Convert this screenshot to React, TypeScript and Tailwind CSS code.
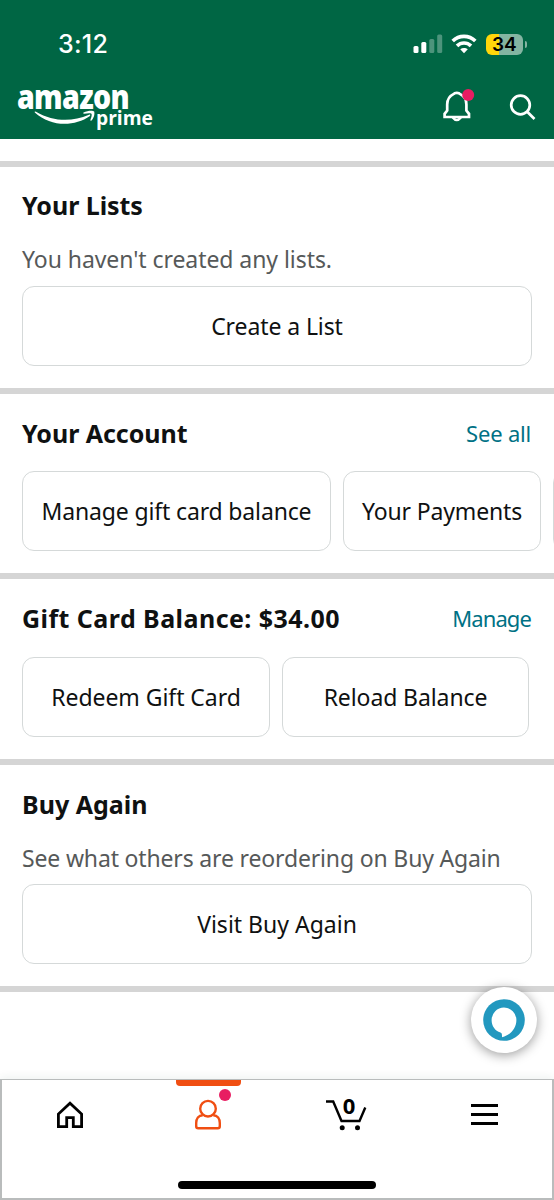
import React from 'react';

const OutlineButton = ({ label, className }: { label?: string, className: string }) => (
  <button className={`h-20 shrink-0 whitespace-nowrap rounded-xl border-[1.5px] border-[#d5d9d9] bg-white text-[23px] text-[#0f1111] ${className}`}>
    {label}
  </button>
);

const SectionTitle = ({ title, link, className, linkClass }: { title: string, link?: string, className: string, linkClass?: string }) => (
  <div className="flex h-10 items-center justify-between pr-[23px]">
    <h2 className={`whitespace-nowrap text-[25px] font-bold text-[#0f1111] ${className}`}>{title}</h2>
    {link && <a href="#" className={`whitespace-nowrap pb-[2px] text-[22px] text-[#007185] ${linkClass}`}>{link}</a>}
  </div>
);

const StatusBar = () => (
  <div className="flex h-[84px] items-center justify-between pl-[58px] pr-[27px] pt-1">
    <span className="mt-[2px] font-['Inter'] text-[25px] font-medium tracking-[0.3px]">3:12</span>
    <div className="flex items-center">
      <svg width="30" height="20" viewBox="0 0 30 20" fill="#fff">
        <rect x="0.5" y="12" width="5" height="7" rx="1.5" />
        <rect x="8.3" y="8" width="5" height="11" rx="1.5" />
        <rect x="16.3" y="5" width="5" height="14" rx="1.5" opacity="0.3" />
        <rect x="24.2" y="0.5" width="5" height="18.5" rx="1.5" opacity="0.3" />
      </svg>
      <svg className="ml-2" width="26" height="20" viewBox="0 0 26 20" fill="none" stroke="#fff" strokeWidth="3.6">
        <path d="M1.7 7.1C8 .8 18 .8 24.3 7.1" />
        <path d="M6 11.9C10 8.1 16 8.1 20 11.9" />
        <path d="M13 19.2l-3.8-3.9c2.2-1.8 5.4-1.8 7.6 0z" fill="#fff" stroke="none" />
      </svg>
      <div className="ml-[9px] flex items-center gap-[1.5px]">
        <div className="flex h-[21px] w-[37.5px] items-center justify-center rounded-[6px] bg-[linear-gradient(90deg,#ffd60a_34%,#84b5a2_34%)] font-['Inter'] text-[19px] font-semibold leading-none text-black">
          34
        </div>
        <div className="h-[7px] w-[2.5px] rounded-r-full bg-[#84b5a2]"></div>
      </div>
    </div>
  </div>
);

const Logo = () => (
  <div className="relative h-[50px] w-[140px] font-['Open_Sans',sans-serif] font-bold">
    <span className="absolute -left-px top-[2px] origin-left scale-x-[0.84] text-[34px] font-extrabold leading-[20px] tracking-[-0.8px]">amazon</span>
    <span className="absolute left-[78px] top-[25px] origin-left scale-x-[0.96] text-[20px] leading-[18px]">prime</span>
    <svg className="absolute left-[16px] top-[26px]" width="64" height="18" viewBox="0 0 64 18" fill="#fff">
      <path d="M.8 2.5Q.2 1 2 1.7C20 12 38 12 55 4.700Q57 4.300 56 6C40 17 17 17 .8 2.500z" />
      <path d="M49.500 2.600C54 .2 59 .3 60.200 1.500C61 4.500 59.500 8.500 57.500 10.500Q56 11.200 56.500 9.500C57.500 7 58 5 57.500 3.700C56 3 53 3.400 50 3.700Q48.500 3.500 49.500 2.600z" />
    </svg>
  </div>
);

const Header = () => (
  <header className="h-[139px] shrink-0 bg-[#006644] text-white">
    <StatusBar />
    <div className="flex justify-between pl-[18px] pr-[17px]">
      <Logo />
      <div className="flex">
        <svg width="34" height="38" viewBox="0 0 34 38" fill="none" stroke="#fff" strokeWidth="2.7">
          <path d="M1.600 33v-3.200l2.600-3.300v-6c0-5.700 2.400-8.600 6.600-10.600C11.500 8.600 16.100 8.600 16.800 9.900c4.200 2 6.600 4.900 6.600 10.600v6l2.600 3.300V33z" />
          <path d="M9.800 33.500q4 5 8 0" />
          <circle cx="25.200" cy="11" r="6" fill="#e81d62" stroke="none" />
        </svg>
        <svg className="ml-[32px] mt-[9px]" width="28" height="28" viewBox="0 0 28 28" fill="none" stroke="#fff" strokeWidth="2.7">
          <circle cx="11.500" cy="12" r="9.300" />
          <path d="M18.200 18.700l7.300 7.300" />
        </svg>
      </div>
    </div>
  </header>
);

const BottomNav = () => (
  <nav className="relative grid h-[121px] shrink-0 grid-cols-4 justify-items-center border-2 border-t-[1.5px] border-[#b9bcbc] bg-white shadow-[0_-3px_8px_rgba(0,60,50,0.06)]">
    <svg className="mr-[2px] mt-[21px]" width="28" height="28" viewBox="0 0 28 28" fill="none" stroke="#000" strokeWidth="2.8">
      <path d="M2.4 25.6V13L14 2.2 25.6 13v12.6h-8.3v-9h-6.6v9z" />
    </svg>
    <div className="flex flex-col items-center">
      <div className="h-[6px] w-[65px] rounded-b-[4px] bg-[#f04e12]"></div>
      <div className="relative mt-[13px]">
        <svg width="28" height="32" viewBox="0 0 28 32" fill="none" stroke="#f04e12" strokeWidth="2.4">
          <circle cx="14" cy="9.700" r="7.800" />
          <path d="M8.800 16.200C4.500 16.200 2.200 19.500 2.200 24v3.200Q2.200 29.200 4.200 29.200h19.600q2 0 2-2V24C25.800 19.500 23.500 16.200 19.200 16.200" />
        </svg>
        <div className="absolute -right-[9px] -top-[10px] h-3 w-3 rounded-full bg-[#e81d62]"></div>
      </div>
    </div>
    <div className="relative mt-[19px] h-[33px] w-[42px]">
      <svg width="42" height="33" viewBox="0 0 42 33" fill="none" stroke="#000" strokeWidth="2.4">
        <path d="M1 2.500h7.200L16.500 22h18L40.300 8.500" />
        <circle cx="17.200" cy="28.700" r="2.500" fill="#000" stroke="none" />
        <circle cx="32.500" cy="28.700" r="2.500" fill="#000" stroke="none" />
      </svg>
      <span className="absolute left-[18px] top-[-6px] font-['Open_Sans',sans-serif] text-[22px] font-bold leading-[24px]">0</span>
    </div>
    <div className="ml-[2px] mt-[24px] flex h-[21px] w-[27px] flex-col justify-between">
      <div className="h-[3px] bg-black"></div>
      <div className="h-[3px] bg-black"></div>
      <div className="h-[3px] bg-black"></div>
    </div>
    <div className="absolute bottom-[9px] left-[176px] h-[8px] w-[198px] rounded-full bg-black"></div>
  </nav>
);

const App: React.FC = () => {
  return (
    <div className="relative flex h-[1200px] w-[554px] flex-col overflow-hidden bg-white font-['Noto_Sans',sans-serif] antialiased">
      <Header />

      <main className="flex-1 overflow-hidden pt-[22px]">
        {/* Your Lists */}
        <section className="h-[227px] border-t-[6px] border-[#d5d5d5] pl-[22px] pt-[19px]">
          <SectionTitle title="Your Lists" className="tracking-[-0.05px]" />
          <p className="mt-[17px] h-[43px] whitespace-nowrap text-[23px] leading-[32px] tracking-[-0.06px] text-[#565959]">You haven't created any lists.</p>
          <OutlineButton label="Create a List" className="w-[510px] tracking-[-0.1px]" />
        </section>

        {/* Your Account */}
        <section className="h-[185px] border-t-[6px] border-[#d5d5d5] pl-[22px] pt-5">
          <SectionTitle title="Your Account" link="See all" className="tracking-[-0.05px]" linkClass="tracking-[-0.2px]" />
          <div className="mt-[17px] flex gap-3">
            <OutlineButton label="Manage gift card balance" className="w-[309px] tracking-[-0.15px]" />
            <OutlineButton label="Your Payments" className="w-[198px] tracking-[-0.15px]" />
            <OutlineButton className="w-[199px]" />
          </div>
        </section>

        {/* Gift card */}
        <section className="h-[186px] border-t-[6px] border-[#d5d5d5] pl-[22px] pt-5">
          <SectionTitle title="Gift Card Balance: $34.00" link="Manage" className="tracking-[0.45px]" linkClass="tracking-[-0.9px]" />
          <div className="mt-[18px] flex gap-3">
            <OutlineButton label="Redeem Gift Card" className="w-[248px] tracking-[-0.05px]" />
            <OutlineButton label="Reload Balance" className="w-[247px] tracking-[-0.1px]" />
          </div>
        </section>

        {/* Buy Again */}
        <section className="h-[227px] border-t-[6px] border-[#d5d5d5] pl-[22px] pt-5">
          <SectionTitle title="Buy Again" className="tracking-normal" />
          <p className="mt-[17px] h-[42px] whitespace-nowrap text-[23px] leading-[32px] tracking-[-0.16px] text-[#565959]">See what others are reordering on Buy Again</p>
          <OutlineButton label="Visit Buy Again" className="w-[510px] tracking-normal" />
        </section>
        <div className="h-[6px] bg-[#d5d5d5]"></div>
      </main>

      {/* Alexa floating button */}
      <button className="absolute left-[471px] top-[987px] flex h-[66px] w-[66px] items-center justify-center rounded-full bg-white shadow-[0_2px_12px_rgba(0,0,0,0.4)]">
        <svg width="42" height="42" viewBox="0 0 42 42">
          <circle cx="21" cy="21" r="20.8" fill="#2298bf" />
          <path d="M19.2 38.2C18.7 36.5 19.5 34.5 17.5 33.6C12 31.8 8.6 27 8.6 21A12.4 12.4 0 0 1 33.4 21C33.4 29.5 27.5 36 19.2 38.2z" fill="#fff" />
        </svg>
      </button>

      <BottomNav />
    </div>
  );
};

export default App;
